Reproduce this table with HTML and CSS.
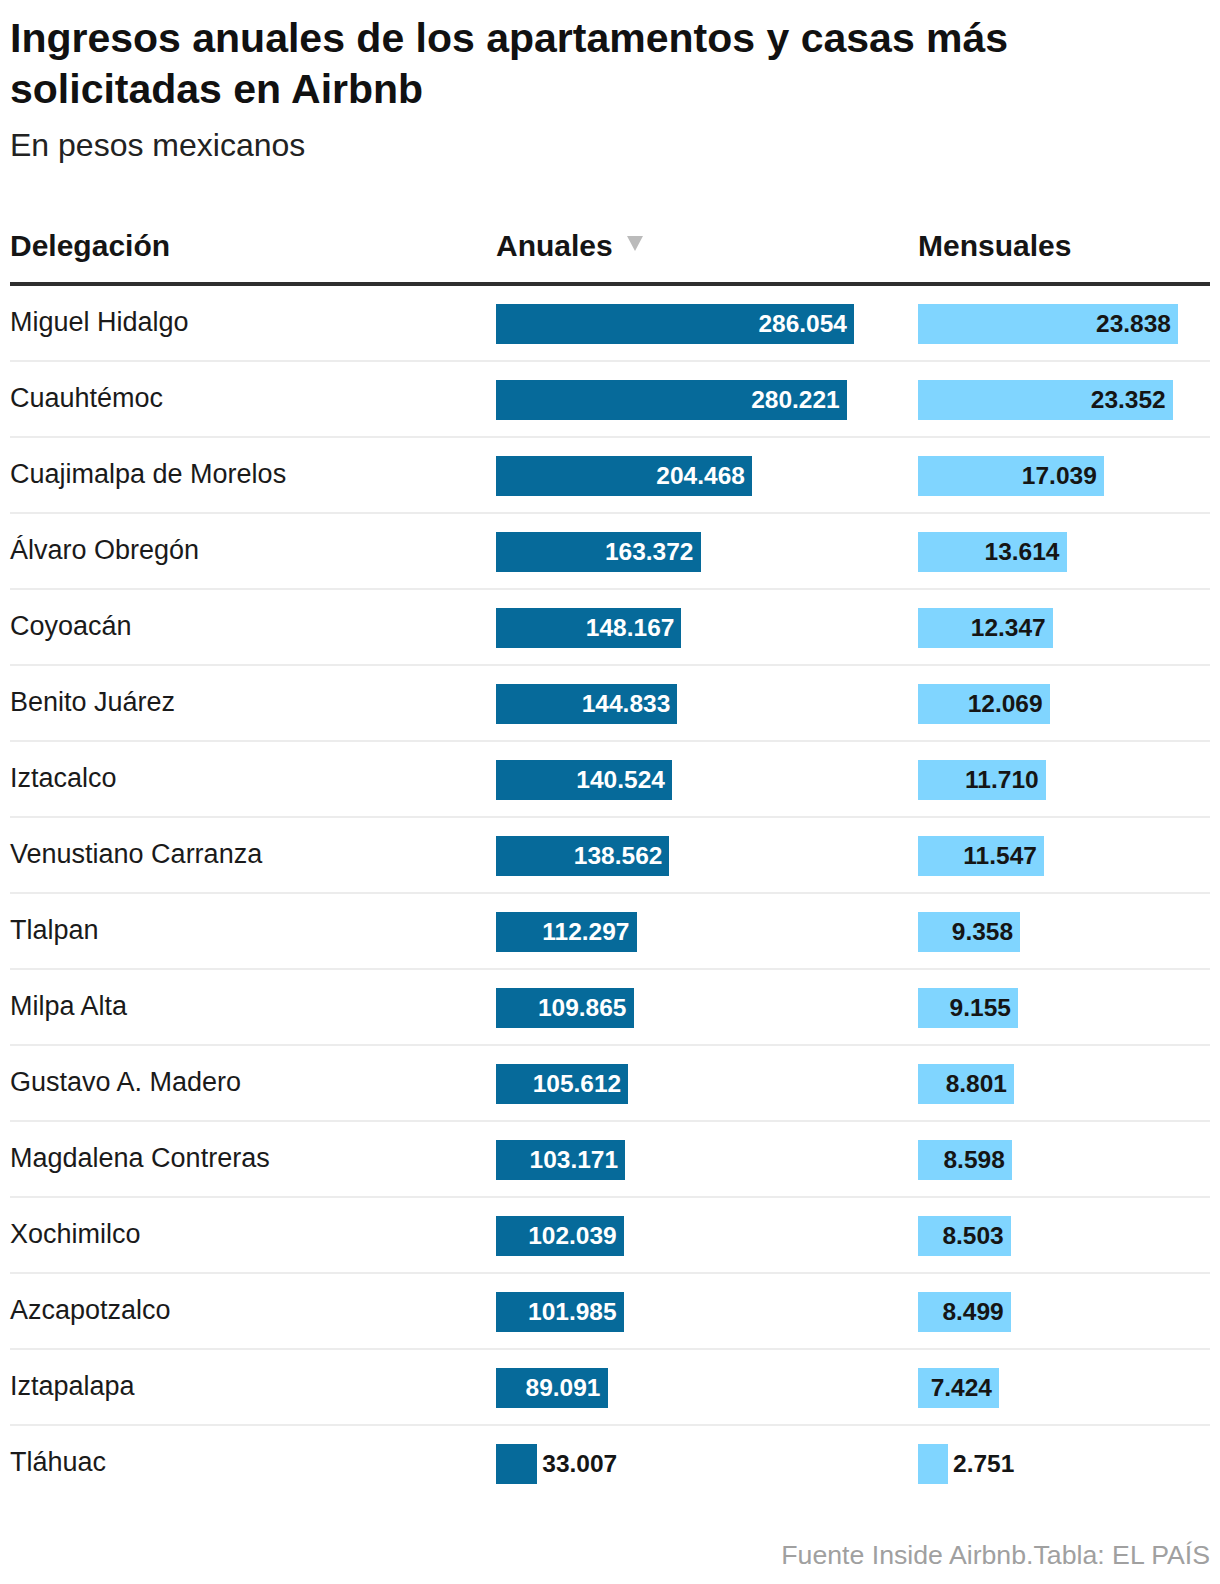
FILE: index.html
```html
<!DOCTYPE html>
<html lang="es">
<head>
<meta charset="utf-8">
<title>Ingresos anuales Airbnb</title>
<link rel="stylesheet" href="styles.css">
</head>
<body>
<div class="page">
  <h1 class="title">Ingresos anuales de los apartamentos y casas más solicitadas en Airbnb</h1>
  <p class="subtitle">En pesos mexicanos</p>

  <div class="table">
    <div class="head">
      <div class="hcell">Delegación</div>
      <div class="hcell">Anuales <span class="sort"><svg width="16" height="15" viewBox="0 0 16 15"><polygon points="0,0 16,0 8,15" fill="#bbbbbb"/></svg></span></div>
      <div class="hcell">Mensuales</div>
    </div>

    <div class="row"><div class="name">Miguel Hidalgo</div><div class="cell"><div class="bar anual" style="width:358px"><span>286.054</span></div></div><div class="cell"><div class="bar mensual" style="width:260px"><span>23.838</span></div></div></div>
    <div class="row"><div class="name">Cuauhtémoc</div><div class="cell"><div class="bar anual" style="width:350.7px"><span>280.221</span></div></div><div class="cell"><div class="bar mensual" style="width:254.7px"><span>23.352</span></div></div></div>
    <div class="row"><div class="name">Cuajimalpa de Morelos</div><div class="cell"><div class="bar anual" style="width:255.9px"><span>204.468</span></div></div><div class="cell"><div class="bar mensual" style="width:185.8px"><span>17.039</span></div></div></div>
    <div class="row"><div class="name">Álvaro Obregón</div><div class="cell"><div class="bar anual" style="width:204.5px"><span>163.372</span></div></div><div class="cell"><div class="bar mensual" style="width:148.5px"><span>13.614</span></div></div></div>
    <div class="row"><div class="name">Coyoacán</div><div class="cell"><div class="bar anual" style="width:185.4px"><span>148.167</span></div></div><div class="cell"><div class="bar mensual" style="width:134.7px"><span>12.347</span></div></div></div>
    <div class="row"><div class="name">Benito Juárez</div><div class="cell"><div class="bar anual" style="width:181.3px"><span>144.833</span></div></div><div class="cell"><div class="bar mensual" style="width:131.6px"><span>12.069</span></div></div></div>
    <div class="row"><div class="name">Iztacalco</div><div class="cell"><div class="bar anual" style="width:175.9px"><span>140.524</span></div></div><div class="cell"><div class="bar mensual" style="width:127.7px"><span>11.710</span></div></div></div>
    <div class="row"><div class="name">Venustiano Carranza</div><div class="cell"><div class="bar anual" style="width:173.4px"><span>138.562</span></div></div><div class="cell"><div class="bar mensual" style="width:125.9px"><span>11.547</span></div></div></div>
    <div class="row"><div class="name">Tlalpan</div><div class="cell"><div class="bar anual" style="width:140.5px"><span>112.297</span></div></div><div class="cell"><div class="bar mensual" style="width:102.1px"><span>9.358</span></div></div></div>
    <div class="row"><div class="name">Milpa Alta</div><div class="cell"><div class="bar anual" style="width:137.5px"><span>109.865</span></div></div><div class="cell"><div class="bar mensual" style="width:99.9px"><span>9.155</span></div></div></div>
    <div class="row"><div class="name">Gustavo A. Madero</div><div class="cell"><div class="bar anual" style="width:132.2px"><span>105.612</span></div></div><div class="cell"><div class="bar mensual" style="width:96px"><span>8.801</span></div></div></div>
    <div class="row"><div class="name">Magdalena Contreras</div><div class="cell"><div class="bar anual" style="width:129.1px"><span>103.171</span></div></div><div class="cell"><div class="bar mensual" style="width:93.8px"><span>8.598</span></div></div></div>
    <div class="row"><div class="name">Xochimilco</div><div class="cell"><div class="bar anual" style="width:127.7px"><span>102.039</span></div></div><div class="cell"><div class="bar mensual" style="width:92.7px"><span>8.503</span></div></div></div>
    <div class="row"><div class="name">Azcapotzalco</div><div class="cell"><div class="bar anual" style="width:127.6px"><span>101.985</span></div></div><div class="cell"><div class="bar mensual" style="width:92.7px"><span>8.499</span></div></div></div>
    <div class="row"><div class="name">Iztapalapa</div><div class="cell"><div class="bar anual" style="width:111.5px"><span>89.091</span></div></div><div class="cell"><div class="bar mensual" style="width:81px"><span>7.424</span></div></div></div>
    <div class="row last"><div class="name">Tláhuac</div><div class="cell"><div class="bar anual" style="width:41.3px"></div><span class="outside">33.007</span></div><div class="cell"><div class="bar mensual" style="width:30px"></div><span class="outside">2.751</span></div></div>
  </div>

  <p class="source">Fuente Inside Airbnb.Tabla: EL PAÍS</p>
</div>
</body>
</html>
```

FILE: styles.css
```css
* { box-sizing: border-box; }

html, body {
  margin: 0;
  padding: 0;
  background: #ffffff;
}

body {
  font-family: "Liberation Sans", Arial, sans-serif;
  color: #1a1a1a;
}

.page {
  padding: 13px 10px 0 10px;
}

.title {
  margin: 0;
  font-size: 41px;
  line-height: 51px;
  font-weight: 700;
  color: #111111;
}

.subtitle {
  margin: 10px 0 0 0;
  font-size: 32px;
  line-height: 40px;
  font-weight: 400;
  color: #222222;
}

.table {
  margin-top: 63px;
}

.head,
.row {
  display: grid;
  grid-template-columns: 486px 422px 292px;
}

.head {
  border-bottom: 4px solid #2e2e2e;
  padding-bottom: 18px;
}

.hcell {
  font-size: 30px;
  line-height: 36px;
  font-weight: 700;
  color: #151515;
  display: flex;
  align-items: center;
}

.sort {
  display: inline-flex;
  margin-left: 14px;
  margin-top: -5px;
}

.row {
  padding: 18px 0 16px 0;
  border-bottom: 2px solid #ececec;
  align-items: start;
}

.row.last {
  border-bottom: none;
}

.name {
  font-size: 27px;
  line-height: 32px;
  padding-top: 2px;
  color: #1a1a1a;
}

.cell {
  display: flex;
  align-items: center;
  height: 40px;
}

.bar {
  height: 40px;
  display: flex;
  align-items: center;
  justify-content: flex-end;
  padding-right: 7px;
  font-size: 24.5px;
  font-weight: 700;
  flex: none;
}

.bar span {
  white-space: nowrap;
}

.bar.anual {
  background: #066a9a;
  color: #ffffff;
}

.bar.mensual {
  background: #80d5ff;
  color: #151515;
}

.outside {
  margin-left: 5px;
  font-size: 24.5px;
  font-weight: 700;
  color: #151515;
  white-space: nowrap;
}

.source {
  margin: 40px 0 0 0;
  text-align: right;
  font-size: 26.7px;
  line-height: 30px;
  color: #a0a0a0;
}
```
